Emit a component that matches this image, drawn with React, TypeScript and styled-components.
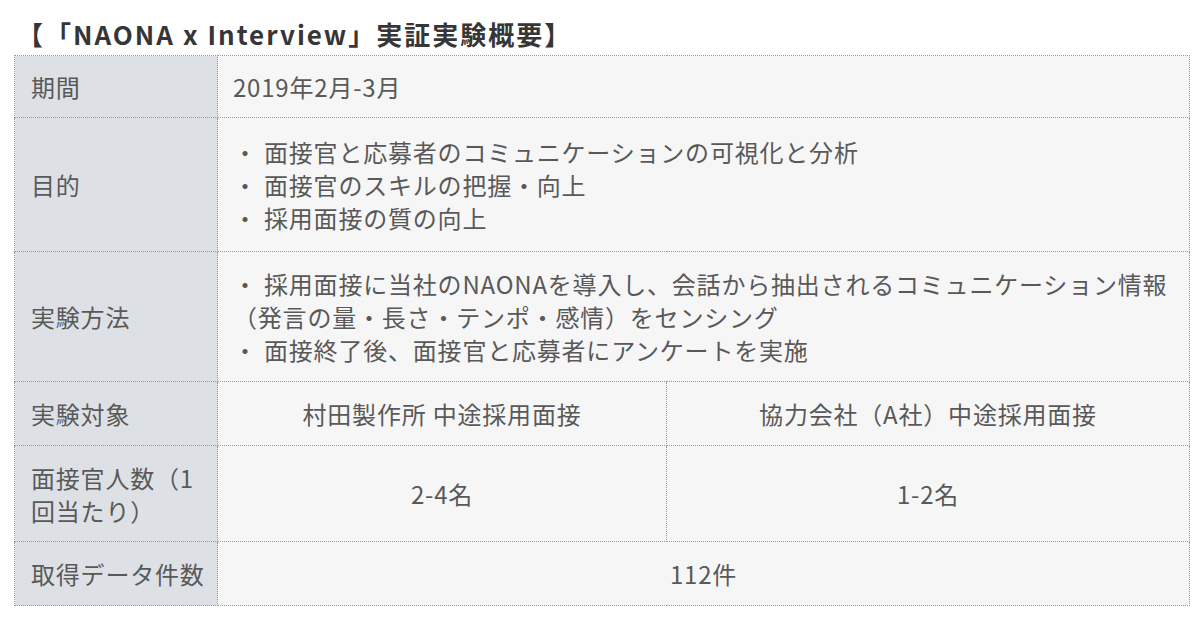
import React from "react";
import styled, { createGlobalStyle } from "styled-components";

const Global = createGlobalStyle`
  html, body { margin: 0; padding: 0; background: #ffffff; }
  body {
    font-family: "Noto Sans CJK JP", "Noto Sans", sans-serif;
    text-spacing-trim: space-all;
  }
`;

const Page = styled.div`
  width: 1200px;
  height: 628px;
  box-sizing: border-box;
  padding: 16px 11px 0 14px;
  background: #ffffff;
`;

const Title = styled.h2`
  margin: 0 0 3px 0;
  padding-left: 3px;
  font-size: 26px;
  line-height: 36px;
  font-weight: 700;
  color: #363636;
  white-space: nowrap;
  text-spacing-trim: space-all;
  letter-spacing: 2px;
`;

const Table = styled.table`
  width: 1175px;
  border-collapse: collapse;
  table-layout: fixed;
  font-size: 24px;
  letter-spacing: 0.8px;
  color: #595959;
`;

const Row = styled.tr<{ $h: number }>`
  height: ${(p) => p.$h}px;
`;

const Head = styled.th`
  box-sizing: border-box;
  background: #dde1e6;
  border: 1px dotted #9a9a9a;
  padding: 0 4px 0 16px;
  text-align: left;
  font-weight: 400;
  line-height: 33px;
  vertical-align: middle;
  white-space: nowrap;
`;

const Cell = styled.td<{ $center?: boolean }>`
  background: #f6f6f6;
  border: 1px dotted #9a9a9a;
  padding: 0 4px 0 15px;
  line-height: 33px;
  vertical-align: middle;
  text-align: ${(p) => (p.$center ? "center" : "left")};
  white-space: nowrap;
`;

const CenterCell = styled(Cell)`
  padding: 0;
`;

const Line = styled.div`
  white-space: nowrap;
`;

export default function App() {
  return (
    <Page>
      <Global />
      <Title>【「NAONA x Interview」実証実験概要】</Title>
      <Table>
        <colgroup>
          <col style={{ width: 203 }} />
          <col style={{ width: 449 }} />
          <col style={{ width: 523 }} />
        </colgroup>
        <tbody>
          <Row $h={62}>
            <Head>期間</Head>
            <Cell colSpan={2}>2019年2月-3月</Cell>
          </Row>
          <Row $h={134}>
            <Head>目的</Head>
            <Cell colSpan={2}>
              <Line>・ 面接官と応募者のコミュニケーションの可視化と分析</Line>
              <Line>・ 面接官のスキルの把握・向上</Line>
              <Line>・ 採用面接の質の向上</Line>
            </Cell>
          </Row>
          <Row $h={130}>
            <Head>実験方法</Head>
            <Cell colSpan={2}>
              <Line>・ 採用面接に当社のNAONAを導入し、会話から抽出されるコミュニケーション情報</Line>
              <Line>（発言の量・長さ・テンポ・感情）をセンシング</Line>
              <Line>・ 面接終了後、面接官と応募者にアンケートを実施</Line>
            </Cell>
          </Row>
          <Row $h={64}>
            <Head>実験対象</Head>
            <CenterCell $center>村田製作所 中途採用面接</CenterCell>
            <CenterCell $center>協力会社（A社）中途採用面接</CenterCell>
          </Row>
          <Row $h={96}>
            <Head>
              <Line>面接官人数（1</Line>
              <Line>回当たり）</Line>
            </Head>
            <CenterCell $center>2-4名</CenterCell>
            <CenterCell $center>1-2名</CenterCell>
          </Row>
          <Row $h={64}>
            <Head>取得データ件数</Head>
            <CenterCell $center colSpan={2}>112件</CenterCell>
          </Row>
        </tbody>
      </Table>
    </Page>
  );
}
